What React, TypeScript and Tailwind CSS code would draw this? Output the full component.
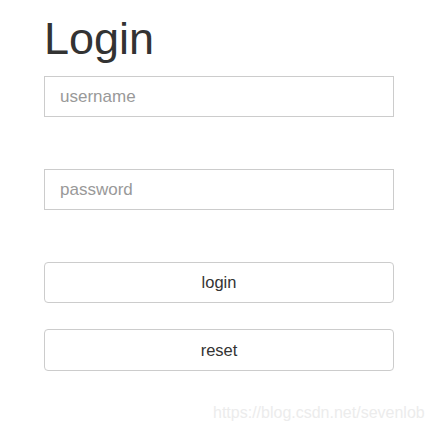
import React from "react";

export default function App() {
  return (
    <div
      className="relative h-[432px] w-[431px] bg-white text-[#333]"
      style={{ fontFamily: '"Liberation Sans", Arial, sans-serif' }}
    >
      <div className="w-[394px] pl-[44px] pt-[14px]">
        <h1 className="mb-[12px] h-[50px] text-[45px] font-normal leading-[50px] text-[#333]">
          Login
        </h1>
        <form className="flex flex-col">
          <input
            type="text"
            placeholder="username"
            className="h-[41px] w-full border border-[#ccc] px-[15px] text-[17px] text-[#555] placeholder:text-[#999] outline-none"
          />
          <input
            type="password"
            placeholder="password"
            className="mt-[52px] h-[41px] w-full border border-[#ccc] px-[15px] text-[17px] text-[#555] placeholder:text-[#999] outline-none"
          />
          <button
            type="button"
            className="mt-[52px] h-[41px] w-full rounded-[4px] border border-[#ccc] bg-white text-[16.5px] text-[#333]"
          >
            login
          </button>
          <button
            type="reset"
            className="mt-[26px] h-[42px] w-full rounded-[4px] border border-[#ccc] bg-white text-[16.5px] text-[#333]"
          >
            reset
          </button>
        </form>
      </div>
      <span className="absolute left-[213px] top-[403px] text-[16px] leading-[20px] text-[#ececec]">
        https://blog.csdn.net/sevenlob
      </span>
    </div>
  );
}
